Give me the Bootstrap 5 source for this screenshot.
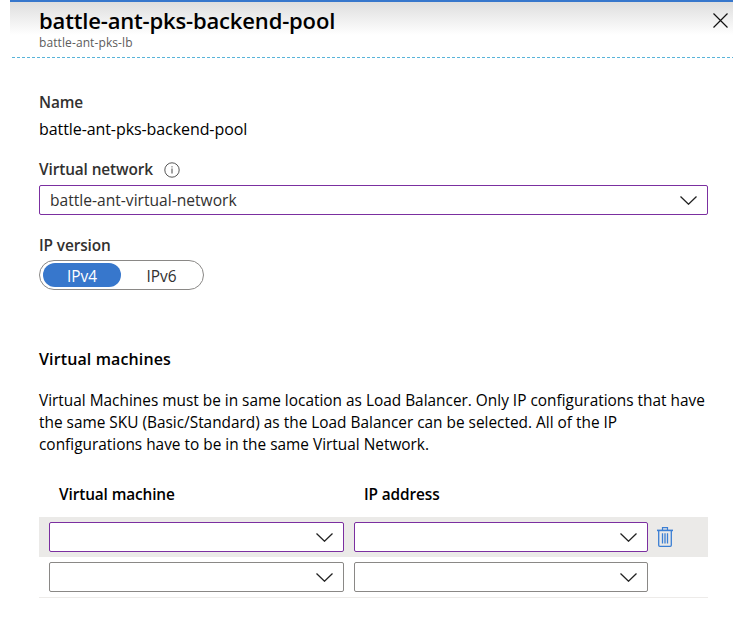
<!DOCTYPE html>
<html lang="en">
<head>
<meta charset="utf-8">
<meta name="viewport" content="width=device-width, initial-scale=1">
<title>battle-ant-pks-backend-pool</title>
<link rel="stylesheet" href="https://cdn.jsdelivr.net/npm/bootstrap@5.3.0/dist/css/bootstrap.min.css">
<style>
body{font-family:"Open Sans","Noto Sans",sans-serif;font-size:15.4px;line-height:22px;color:#000;background:#fff;overflow:hidden}
.blade{margin-left:10px;border-top:2px solid #3777cc}
.blade-head{height:55px;padding-left:29px;padding-top:5px;background:linear-gradient(#dedede,#fff 33px)}
.blade-head h1{font-size:22px;line-height:27px;font-weight:600;letter-spacing:-.16px}
.sub{font-size:12px;line-height:18px;color:#5c5c5c;letter-spacing:.1px}
.close-btn{width:15px;height:15px;margin:6px 5px 0 0}
.dash{height:1px;margin-left:2px;background:repeating-linear-gradient(90deg,#59b4d9 0 3px,transparent 3px 5px)}
.blade-body{padding:33px 25px 0 29px}
.lbl{line-height:24px;font-weight:600;color:#323130;letter-spacing:-.12px}
.val{margin:3px 0 18px;font-size:16px;letter-spacing:-.08px}
.info{margin-left:11px}
.h-sec{font-size:16px;line-height:22px;font-weight:600;margin:58px 0 20px;letter-spacing:.12px}
.help{font-size:15.4px;margin-bottom:27px}
.picker{height:30px;border:1px solid #8a8886;border-radius:2px;background:#fff;padding:0 10px;color:#323130;font-size:15.6px}
.picker.changed{border-color:#7b2fa0}
.picker svg{width:17px;height:9px}
.net{margin:3px 0 19px}
.toggle{width:165px;height:30px;border:1px solid #8a8886;border-radius:15px;padding:2px 3px;margin-top:2px}
.toggle span{flex:none;width:78px;height:24px;line-height:28px;border-radius:12px;text-align:center;color:#323130}
.toggle span+span{width:81px}
.toggle .on{background:#3777cc;color:#fff}
.vm-head{line-height:24px;padding-left:20px;font-weight:600;margin-bottom:10px;letter-spacing:-.12px}
.vm-head div:first-child{width:305px}
.vm-row{height:40px;padding-left:10px;gap:10px}
.vm-row.hot{background:#ebeae8}
.vm-row .picker{width:295px}
.vm-row .picker+.picker{width:294px}
.vm-list{border-bottom:1px solid #edebe9}
.trash{margin-left:-1px}
</style>
</head>
<body>
<svg class="d-none"><symbol id="chev" viewBox="0 0 17 9"><path d="M.5.5l8 7.7 8-7.7" fill="none" stroke="#222" stroke-width="1.3"/></symbol></svg>
<main class="blade">
  <header class="blade-head d-flex justify-content-between">
    <div class="text-nowrap">
      <h1 class="mb-0">battle-ant-pks-backend-pool</h1>
      <div class="sub">battle-ant-pks-lb</div>
    </div>
    <svg class="close-btn" viewBox="0 0 15 15"><path d="M.5.5l14 14M14.5.5l-14 14" stroke="#111" stroke-width="1.2"/></svg>
  </header>
  <div class="dash"></div>
  <div class="blade-body">
    <div class="lbl">Name</div>
    <div class="val">battle-ant-pks-backend-pool</div>
    <div class="lbl d-flex align-items-center">Virtual network
      <svg class="info" width="16" height="16" viewBox="0 0 16 16"><circle cx="8" cy="8" r="7.2" fill="none" stroke="#444" stroke-width=".9"/><path d="M8 6.5V11.5M8 4.3v1.1" stroke="#444"/></svg>
    </div>
    <div class="picker net changed d-flex align-items-center justify-content-between">battle-ant-virtual-network<svg><use href="#chev"/></svg></div>
    <div class="lbl">IP version</div>
    <div class="toggle d-flex"><span class="on">IPv4</span><span>IPv6</span></div>
    <h2 class="h-sec">Virtual machines</h2>
    <p class="help text-nowrap">Virtual Machines must be in same location as Load Balancer. Only IP configurations that have<br>the same SKU (Basic/Standard) as the Load Balancer can be selected. All of the IP<br>configurations have to be in the same Virtual Network.</p>
    <div class="vm-head d-flex"><div>Virtual machine</div><div>IP address</div></div>
    <div class="vm-list">
      <div class="vm-row hot d-flex align-items-center">
        <div class="picker changed d-flex align-items-center justify-content-end"><svg><use href="#chev"/></svg></div>
        <div class="picker changed d-flex align-items-center justify-content-end"><svg><use href="#chev"/></svg></div>
        <svg class="trash" width="16" height="20" viewBox="0 0 16 20"><g fill="none" stroke="#3b7fd4"><path d="M5.5 3V.6h5V3" stroke-width="1.2"/><path d="M0 3.4h16" stroke-width="1.6"/><path d="M1.7 4v14.2q0 1.1 1.1 1.1h10.4q1.1 0 1.1-1.1V4" stroke-width="1.3"/><path d="M5.5 6.2v10.3M8 6.2v10.3M10.5 6.2v10.3" stroke-width="1.3"/></g></svg>
      </div>
      <div class="vm-row d-flex align-items-center">
        <div class="picker d-flex align-items-center justify-content-end"><svg><use href="#chev"/></svg></div>
        <div class="picker d-flex align-items-center justify-content-end"><svg><use href="#chev"/></svg></div>
      </div>
    </div>
  </div>
</main>
<script src="https://cdn.jsdelivr.net/npm/bootstrap@5.3.0/dist/js/bootstrap.bundle.min.js"></script>
</body>
</html>
